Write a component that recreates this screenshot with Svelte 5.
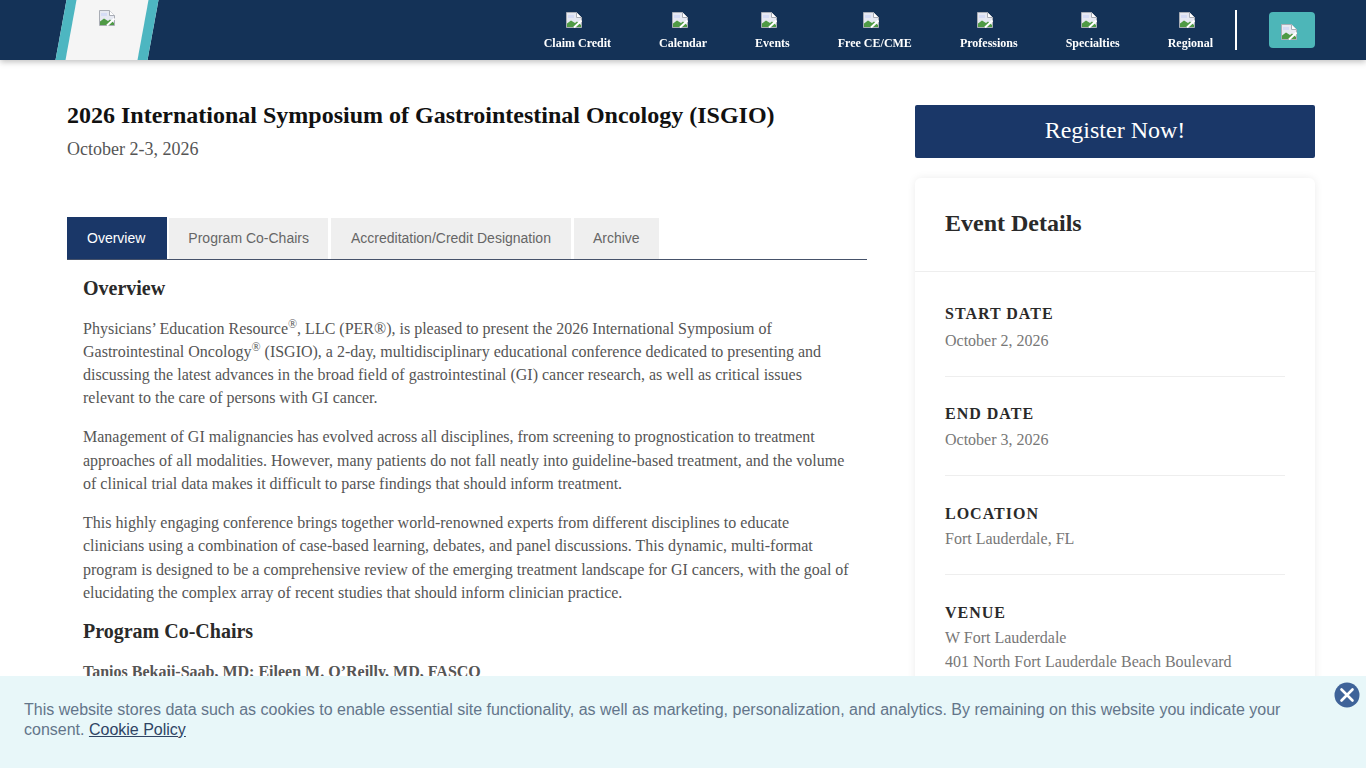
<script>
  const nav = ['Claim Credit', 'Calendar', 'Events', 'Free CE/CME', 'Professions', 'Specialties', 'Regional'];
  const details = [
    { label: 'START DATE', lines: ['October 2, 2026'] },
    { label: 'END DATE', lines: ['October 3, 2026'] },
    { label: 'LOCATION', lines: ['Fort Lauderdale, FL'] },
    { label: 'VENUE', lines: ['W Fort Lauderdale', '401 North Fort Lauderdale Beach Boulevard', 'Fort Lauderdale, FL 33304'] }
  ];
  const tabs = ['Overview', 'Program Co-Chairs', 'Accreditation/Credit Designation', 'Archive'];
</script>

{#snippet broken()}
  <svg class="broken" viewBox="0 0 16 16" width="16" height="16" aria-hidden="true">
    <path d="M0.5 0.5H10.5L15.5 5.5V15.5H0.5Z" fill="#e6e9f2" stroke="#a9adb5"/>
    <path d="M10.5 0.5V5.5H15.5" fill="#fff" stroke="#a9adb5"/>
    <path d="M2 3h6v3H2z" fill="#d5dcf5"/>
    <path d="M1 15V11.5L5 8.5L9 11L11 9.5L15 13V15Z" fill="#4f9a45"/>
    <path d="M8 15.5L15.5 8.5" stroke="#fff" stroke-width="2"/>
  </svg>
{/snippet}

<header class="topbar">
  <div class="logo">{@render broken()}</div>
  <nav class="nav">
    {#each nav as item}
      <a class="nav-item" href="#top">{@render broken()}<span>{item}</span></a>
    {/each}
    <div class="divider"></div>
    <button class="search">{@render broken()}</button>
  </nav>
</header>

<main class="page">
  <section class="content">
    <h1>2026 International Symposium of Gastrointestinal Oncology (ISGIO)</h1>
    <p class="date">October 2-3, 2026</p>
    <div class="tabs">
      {#each tabs as t, i}
        <div class="tab" class:active={i === 0}>{t}</div>
      {/each}
    </div>
    <div class="body">
      <h2>Overview</h2>
      <p>Physicians’ Education Resource<sup>®</sup>, LLC (PER®), is pleased to present the 2026 International Symposium of Gastrointestinal Oncology<sup>®</sup> (ISGIO), a 2-day, multidisciplinary educational conference dedicated to presenting and discussing the latest advances in the broad field of gastrointestinal (GI) cancer research, as well as critical issues relevant to the care of persons with GI cancer.</p>
      <p>Management of GI malignancies has evolved across all disciplines, from screening to prognostication to treatment approaches of all modalities. However, many patients do not fall neatly into guideline-based treatment, and the volume of clinical trial data makes it difficult to parse findings that should inform treatment.</p>
      <p>This highly engaging conference brings together world-renowned experts from different disciplines to educate clinicians using a combination of case-based learning, debates, and panel discussions. This dynamic, multi-format program is designed to be a comprehensive review of the emerging treatment landscape for GI cancers, with the goal of elucidating the complex array of recent studies that should inform clinician practice.</p>
      <h2>Program Co-Chairs</h2>
      <p><strong>Tanios Bekaii-Saab, MD; Eileen M. O’Reilly, MD, FASCO</strong></p>
    </div>
  </section>
  <aside class="side">
    <a class="register" href="#top">Register Now!</a>
    <div class="card">
      <h3>Event Details</h3>
      <div class="rows">
        {#each details as d, i}
          <div class="row" class:last={i === details.length - 1}>
            <h4>{d.label}</h4>
            {#each d.lines as l}<p>{l}</p>{/each}
          </div>
        {/each}
      </div>
    </div>
  </aside>
</main>

<div class="cookie">
  <p>This website stores data such as cookies to enable essential site functionality, as well as marketing, personalization, and analytics. By remaining on this website you indicate your consent. <a href="#top">Cookie Policy</a></p>
  <button class="close" aria-label="Close">
    <svg viewBox="0 0 26 26" width="26" height="26"><circle cx="13" cy="13" r="12.5" fill="#3f6399"/><path d="M7.5 7.5L18.5 18.5M18.5 7.5L7.5 18.5" stroke="#fff" stroke-width="2.6" stroke-linecap="round"/></svg>
  </button>
</div>

<style>
  :global(body) { margin: 0; background: #fff; font-family: "Liberation Serif", serif; height: 768px; overflow: hidden; }
  .topbar {
    position: fixed; top: 0; left: 0; right: 0; height: 60px; background: #143257;
    box-shadow: 0 2px 6px rgba(0,0,0,.25); display: flex; justify-content: space-between; z-index: 5;
  }
  .broken { display: block; }
  .logo {
    margin-left: 61px; width: 72px; background: #f5f5f5; border: solid #4db6c1; border-width: 0 10px;
    transform: skewX(-10.4deg); box-sizing: content-box; display: flex; justify-content: center; padding-top: 10px; height: 50px;
  }
  .logo .broken { transform: translateX(-2.2px) skewX(10.4deg); }
  .nav { display: flex; margin-right: 51px; align-items: flex-start; }
  .nav-item {
    display: flex; flex-direction: column; align-items: center; padding: 12px 24px 0; color: #fff; text-decoration: none;
    font-size: 12px; font-weight: 700; line-height: 14px;
  }
  .nav-item .broken { margin-right: 7px; }
  .nav-item span { margin-top: 8px; white-space: nowrap; }
  .nav-item:nth-child(7) { padding-right: 22px; }
  .divider { width: 2px; height: 40px; margin-top: 10px; background: #fff; }
  .search {
    width: 46px; height: 36px; margin: 12px 0 0 32px; padding: 12px 0 0 12px; border: 0; border-radius: 4px; background: #4db6b8;
    display: flex; align-items: flex-start; justify-content: flex-start; box-sizing: border-box;
  }
  .page { display: flex; gap: 48px; padding: 60px 51px 0 67px; }
  .content { width: 800px; flex: none; }
  h1 { margin: 42px 0 0; font-size: 24px; line-height: 26px; color: #111; font-weight: 700; }
  .date { margin: 8px 0 0; font-size: 18px; line-height: 26px; color: #555; }
  .tabs { display: flex; gap: 3px; margin-top: 55px; border-bottom: 1px solid #46526a; height: 42px; }
  .tab {
    font-family: "Liberation Sans", sans-serif; font-size: 14px; padding: 0 20px; line-height: 41px; height: 41px; margin-top: 1px;
    background: #efefef; color: #666; white-space: nowrap;
  }
  .tab:nth-child(2), .tab:nth-child(4) { padding: 0 19px; }
  .tab.active { background: #1a3768; color: #fff; height: 42px; margin: 0 -1px 0 0; padding: 0 22px 0 20px; line-height: 42px; }
  .body { padding: 0 16px; }
  h2 { margin: 16px 0 0; font-size: 20px; line-height: 24px; color: #2a2a2a; }
  .body p { margin: 15.7px 0 0; font-size: 16px; line-height: 23.3px; color: #555; }
  .body h2 + p { margin-top: 16.5px; }
  .body h2:not(:first-child) { margin-top: 15px; }
  sup { font-size: 12px; line-height: 0; }
  .side { width: 400px; flex: none; padding-top: 45px; }
  .register {
    display: block; height: 53px; line-height: 51px; text-align: center; background: #1a3768; color: #fff; text-decoration: none;
    font-size: 24px; border-radius: 2px;
  }
  .card { margin-top: 20px; border-radius: 6px; box-shadow: 0 0 8px rgba(0,0,0,.08); }
  h3 { margin: 0; padding: 30px 30px 32px; font-size: 24px; line-height: 30px; color: #2a2a2a; border-bottom: 1px solid #eee; height: 31px; }
  .rows { padding: 0 30px; }
  .row { padding: 27.5px 0 24px; border-bottom: 1px solid #eee; }
  .row:first-child { padding-top: 32px; }
  .row:first-child h4 { margin-bottom: 4.6px; }
  .row.last { border-bottom: 0; }
  h4 { margin: 0 0 3.5px; font-size: 16px; line-height: 20px; letter-spacing: 1px; color: #2a2a2a; }
  .row p { margin: 0; font-size: 16px; line-height: 23.3px; color: #777; }
  .cookie {
    position: fixed; left: 0; right: 0; bottom: 0; height: 92px; background: #e8f7f9; z-index: 6;
  }
  .cookie p {
    margin: 0; padding: 24px 24px 0; font-family: "Liberation Sans", sans-serif; font-size: 16px; line-height: 20px; color: #63758a;
  }
  .cookie a { color: #2f4464; }
  .close { position: absolute; top: 6px; right: 6px; width: 26px; height: 26px; padding: 0; border: 0; background: none; }
  .close svg { display: block; }
</style>
